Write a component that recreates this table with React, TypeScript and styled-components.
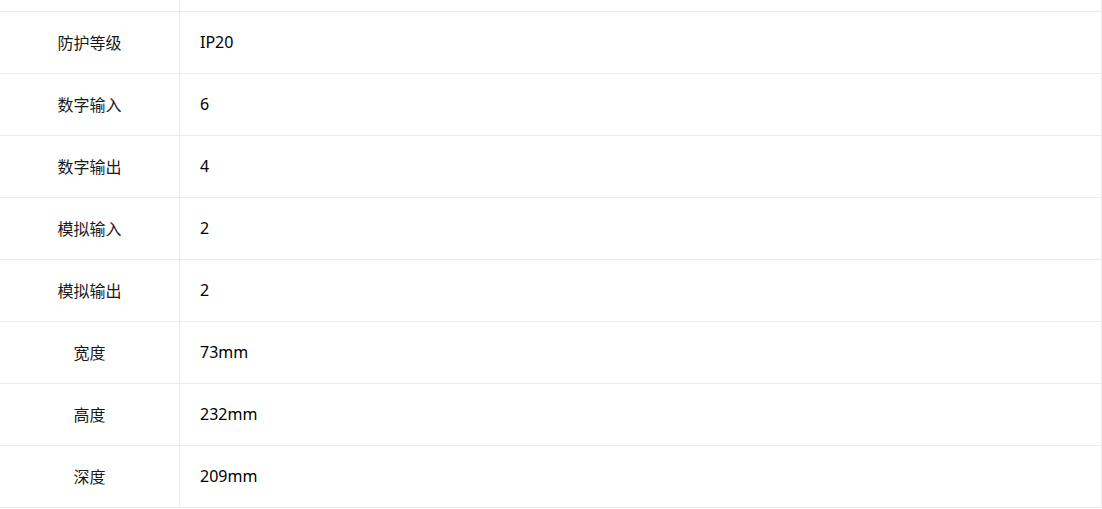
import React from 'react';
import styled, { createGlobalStyle } from 'styled-components';

const GlobalStyle = createGlobalStyle`
  html, body {
    margin: 0;
    padding: 0;
    background: #fff;
  }
  body {
    font-family: "Noto Sans", "Noto Sans CJK SC", sans-serif;
  }
`;

const Table = styled.div`
  width: 1101px;
  display: grid;
  grid-template-columns: 180px 1fr;
  border-right: 1px solid #ebebeb;
`;

interface CellProps {
  $partial?: boolean,
}

const Label = styled.div<CellProps>`
  box-sizing: border-box;
  height: ${(props) => (props.$partial ? '12px' : '62px')};
  display: flex;
  align-items: center;
  justify-content: center;
  padding-bottom: 2px;
  border-right: 1px solid #ebebeb;
  border-bottom: 1px solid #ebebeb;
  font-family: "Noto Sans CJK SC", sans-serif;
  font-size: 16px;
  color: #1a1a1a;
`;

const Value = styled.div<CellProps>`
  box-sizing: border-box;
  height: ${(props) => (props.$partial ? '12px' : '62px')};
  display: flex;
  align-items: center;
  padding: 0 0 2px 20px;
  border-bottom: 1px solid #ebebeb;
  font-family: "Noto Sans", "Noto Sans CJK SC", sans-serif;
  font-size: 16px;
  color: #000;
`;

const specs = [
  ['防护等级', 'IP20'],
  ['数字输入', '6'],
  ['数字输出', '4'],
  ['模拟输入', '2'],
  ['模拟输出', '2'],
  ['宽度', '73mm'],
  ['高度', '232mm'],
  ['深度', '209mm'],
];

export default function App() {
  return (
    <>
      <GlobalStyle />
      <Table>
        <Label $partial />
        <Value $partial />
        {specs.map(([label, value]) => (
          <React.Fragment key={label}>
            <Label>{label}</Label>
            <Value>{value}</Value>
          </React.Fragment>
        ))}
      </Table>
    </>
  );
}
